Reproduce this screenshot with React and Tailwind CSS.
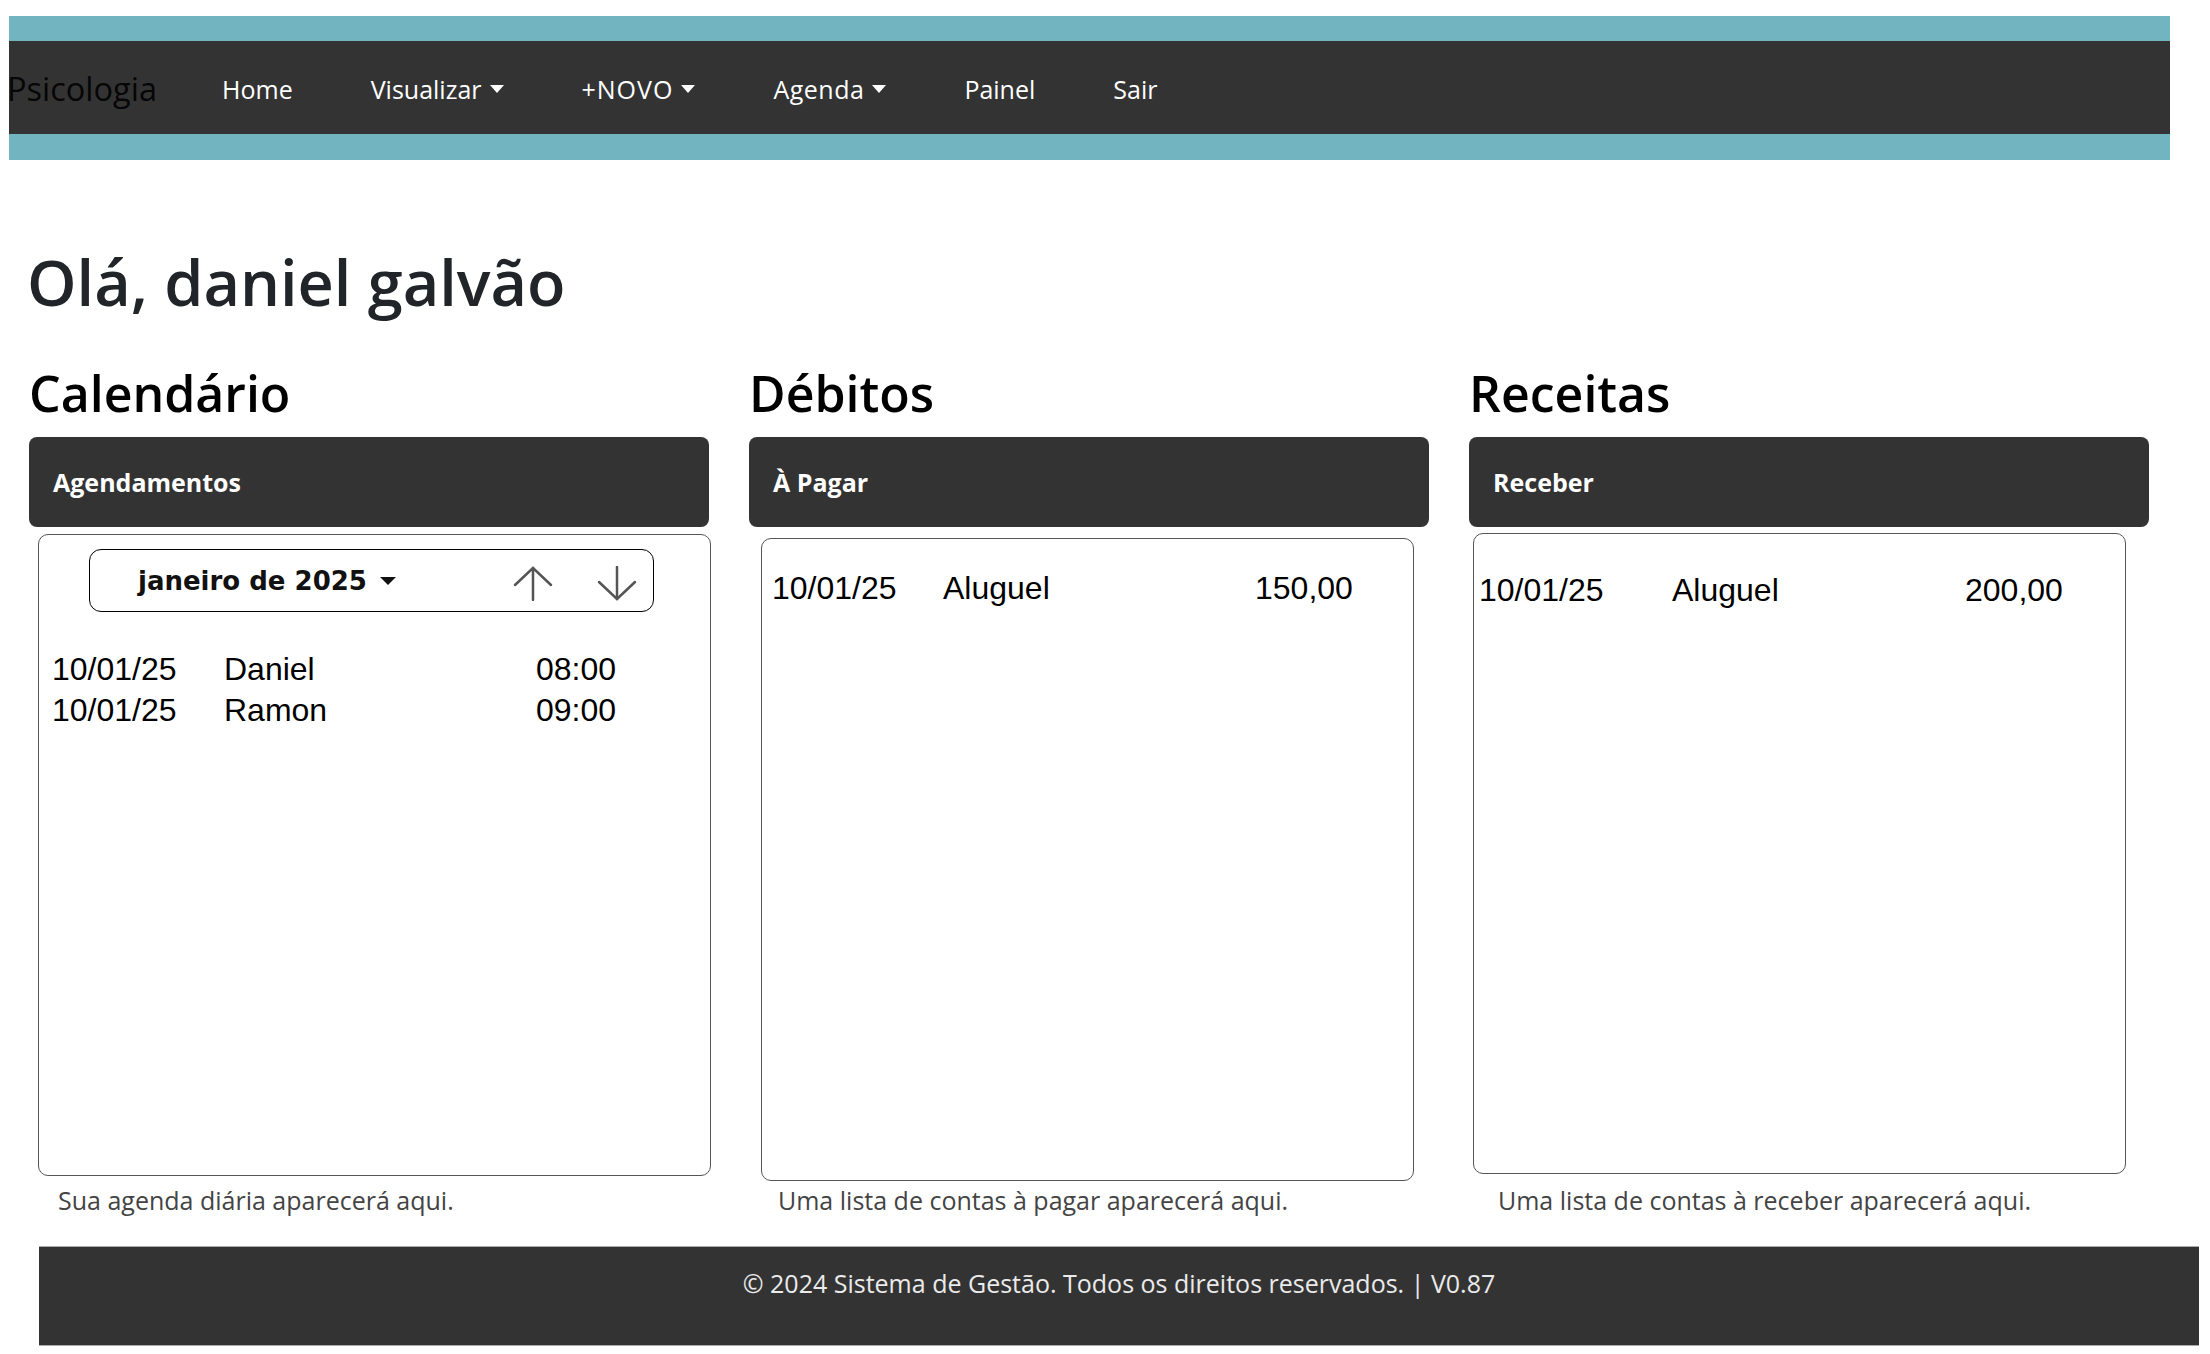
import React from "react";

const navLinks = [
  { label: "Home" },
  { label: "Visualizar", caret: true },
  { label: "+NOVO", caret: true, track: "tracking-[1px]" },
  { label: "Agenda", caret: true, track: "tracking-[0.5px]" },
  { label: "Painel" },
  { label: "Sair" },
];

const agendamentos = [
  { data: "10/01/25", nome: "Daniel", hora: "08:00" },
  { data: "10/01/25", nome: "Ramon", hora: "09:00" },
];

function ArrowUp() {
  return (
    <svg width="40" height="35" viewBox="0 0 40 35" fill="none" stroke="#555" strokeWidth="2.5" strokeLinecap="round">
      <path d="M20 2 L20 34" />
      <path d="M2 19 L20 2 L38 19" />
    </svg>
  );
}

function ArrowDown() {
  return (
    <svg width="40" height="35" viewBox="0 0 40 35" fill="none" stroke="#555" strokeWidth="2.5" strokeLinecap="round">
      <path d="M20 1 L20 33" />
      <path d="M2 16 L20 33 L38 16" />
    </svg>
  );
}

function Caret() {
  return (
    <span className="inline-block w-0 h-0 border-l-[7px] border-r-[7px] border-t-[8px] border-l-transparent border-r-transparent border-t-white" />
  );
}

export default function App() {
  return (
    <div className="min-h-screen bg-white font-['Open_Sans',sans-serif]">
      {/* Navbar */}
      <nav className="ml-[9px] mt-[16px] w-[2161px] bg-[#72b4bf] pt-[25px] pb-[26px]">
        <div className="h-[93px] bg-[#333] flex items-center pt-[3px]">
          <span className="-ml-[2px] mr-[65px] text-[32.5px] leading-[36px] text-black/90">Psicologia</span>
          <div className="flex items-center gap-[78px] text-[25px] leading-[32px] text-white">
            {navLinks.map((l) => (
              <span key={l.label} className={`flex items-center ${l.track || ""}`}>
                {l.label}
                {l.caret && (
                  <span className="ml-[8px] flex items-center">
                    <Caret />
                  </span>
                )}
              </span>
            ))}
          </div>
        </div>
      </nav>

      <main className="pl-[29px]">
        <h1 className="-ml-[2px] mt-[87px] text-[63px] leading-[70px] font-semibold text-[#212529]">
          Olá, daniel galvão
        </h1>

        <div className="mt-[48px] grid grid-cols-[680px_680px_680px] gap-x-[40px]">
          {/* Calendário */}
          <div className="flex flex-col">
            <h2 className="text-[50px] leading-[56px] font-semibold text-black">Calendário</h2>
            <div className="mt-[16px] h-[90px] rounded-[8px] bg-[#333] flex items-center pl-6">
              <span className="text-[25px] leading-[32px] font-bold text-white">Agendamentos</span>
            </div>
            <div className="ml-[9px] mt-[7px] w-[673px] h-[642px] border border-[#555] rounded-[10px] bg-white">
              <div className="ml-[50px] mt-[14px] w-[565px] h-[63px] border border-black rounded-[12px] flex items-center pl-[48px] pr-[16px]">
                <span className="font-['DejaVu_Sans',sans-serif] font-bold text-[26px] leading-[30px] text-[#111]">
                  janeiro de 2025
                </span>
                <span className="ml-[13px] flex items-center">
                  <span className="inline-block w-0 h-0 border-l-[8px] border-r-[8px] border-t-[8px] border-l-transparent border-r-transparent border-t-[#111]" />
                </span>
                <div className="ml-auto mt-[6px] flex items-center gap-[44px]">
                  <ArrowUp />
                  <ArrowDown />
                </div>
              </div>
              <div className="mt-[37px] pl-[13px] font-['Liberation_Sans',Arial,sans-serif] text-[32px] leading-[41px] text-black">
                {agendamentos.map((a, i) => (
                  <div key={i} className="grid grid-cols-[172px_312px_1fr]">
                    <span>{a.data}</span>
                    <span>{a.nome}</span>
                    <span>{a.hora}</span>
                  </div>
                ))}
              </div>
            </div>
            <p className="mt-[7px] pl-[29px] text-[25px] leading-[34px] text-[#444]">
              Sua agenda diária aparecerá aqui.
            </p>
          </div>

          {/* Débitos */}
          <div className="flex flex-col">
            <h2 className="text-[50px] leading-[56px] font-semibold text-black">Débitos</h2>
            <div className="mt-[16px] h-[90px] rounded-[8px] bg-[#333] flex items-center pl-6">
              <span className="text-[25px] leading-[32px] font-bold text-white">À Pagar</span>
            </div>
            <div className="ml-[12px] mt-[11px] w-[653px] h-[643px] border border-[#555] rounded-[10px] bg-white pt-[29px] pl-[10px]">
              <div className="grid grid-cols-[171px_312px_1fr] font-['Liberation_Sans',Arial,sans-serif] text-[32px] leading-[41px] text-black">
                <span>10/01/25</span>
                <span>Aluguel</span>
                <span>150,00</span>
              </div>
            </div>
            <p className="mt-[2px] pl-[29px] text-[25px] leading-[34px] text-[#444]">
              Uma lista de contas à pagar aparecerá aqui.
            </p>
          </div>

          {/* Receitas */}
          <div className="flex flex-col">
            <h2 className="text-[50px] leading-[56px] font-semibold text-black">Receitas</h2>
            <div className="mt-[16px] h-[90px] rounded-[8px] bg-[#333] flex items-center pl-6">
              <span className="text-[25px] leading-[32px] font-bold text-white">Receber</span>
            </div>
            <div className="ml-[4px] mt-[6px] w-[653px] h-[641px] border border-[#555] rounded-[10px] bg-white pt-[36px] pl-[5px]">
              <div className="grid grid-cols-[193px_293px_1fr] font-['Liberation_Sans',Arial,sans-serif] text-[32px] leading-[41px] text-black">
                <span>10/01/25</span>
                <span>Aluguel</span>
                <span>200,00</span>
              </div>
            </div>
            <p className="mt-[9px] pl-[29px] text-[25px] leading-[34px] text-[#444]">
              Uma lista de contas à receber aparecerá aqui.
            </p>
          </div>
        </div>
      </main>

      {/* Footer */}
      <footer className="ml-[39px] mt-[29px] w-[2160px] h-[100px] bg-[#333] border-y border-[#aaa] pt-[19px] text-center">
        <p className="text-[25px] leading-[34px] text-white/90">
          © 2024 Sistema de Gestão. Todos os direitos reservados. | V0.87
        </p>
      </footer>
    </div>
  );
}
